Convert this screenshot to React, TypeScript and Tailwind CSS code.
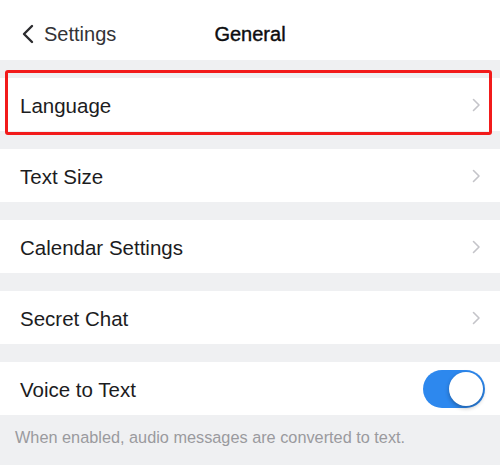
import React from "react";

const Chevron = () => (
  <svg width="9" height="14" viewBox="0 0 9 14" fill="none">
    <path d="M1.5 1.5L7 7L1.5 12.5" stroke="#c4c4c9" strokeWidth="1.6" strokeLinecap="round" strokeLinejoin="round" />
  </svg>
);

const Row = ({ label }: { label: string }) => (
  <div className="flex h-[53px] items-center justify-between bg-white pl-5 pr-[19px]">
    <span className="pt-[3px] text-[20.5px] text-[#1c1c1e]">{label}</span>
    <Chevron />
  </div>
);

const Gap = () => <div className="h-[18px]" />;

export default function App() {
  return (
    <div
      className="h-[465px] w-[500px] overflow-hidden bg-[#eff0f2]"
      style={{ fontFamily: '"Liberation Sans", Arial, sans-serif' }}
    >
      <div className="relative flex h-[60px] items-center justify-center bg-white pt-[8px]">
        <div className="absolute left-[22px] top-0 flex h-full items-center gap-[10px] pt-[8px]">
          <svg width="12" height="20" viewBox="0 0 12 20" fill="none">
            <path d="M10 2L2 10L10 18" stroke="#2b2b2e" strokeWidth="2.4" strokeLinecap="round" strokeLinejoin="round" />
          </svg>
          <span className="text-[20px] text-[#333336]">Settings</span>
        </div>
        <span className="text-[20px] text-[#0d0d0f] [-webkit-text-stroke:0.4px_#0d0d0f]">General</span>
      </div>
      <Gap />
      <div className="relative">
        <Row label="Language" />
        <div className="pointer-events-none absolute left-[5px] right-[8px] top-[-8px] bottom-[-4px] rounded-[3px] border-[3px] border-[#f21b1b]" />
      </div>
      <Gap />
      <Row label="Text Size" />
      <Gap />
      <Row label="Calendar Settings" />
      <Gap />
      <Row label="Secret Chat" />
      <Gap />
      <div className="flex h-[53px] items-center justify-between bg-white pl-5 pr-[15px]">
        <span className="pt-[3px] text-[20.5px] text-[#1c1c1e]">Voice to Text</span>
        <div className="flex h-[38px] w-[62px] items-center justify-end rounded-full bg-[#2d88ee] p-[2px]">
          <div className="h-[34px] w-[34px] rounded-full bg-white shadow-[0_2px_4px_rgba(0,0,0,0.3)]" />
        </div>
      </div>
      <div className="pl-[15px] pt-[10px] text-[16.3px] text-[#9a9a9e]">
        When enabled, audio messages are converted to text.
      </div>
    </div>
  );
}
